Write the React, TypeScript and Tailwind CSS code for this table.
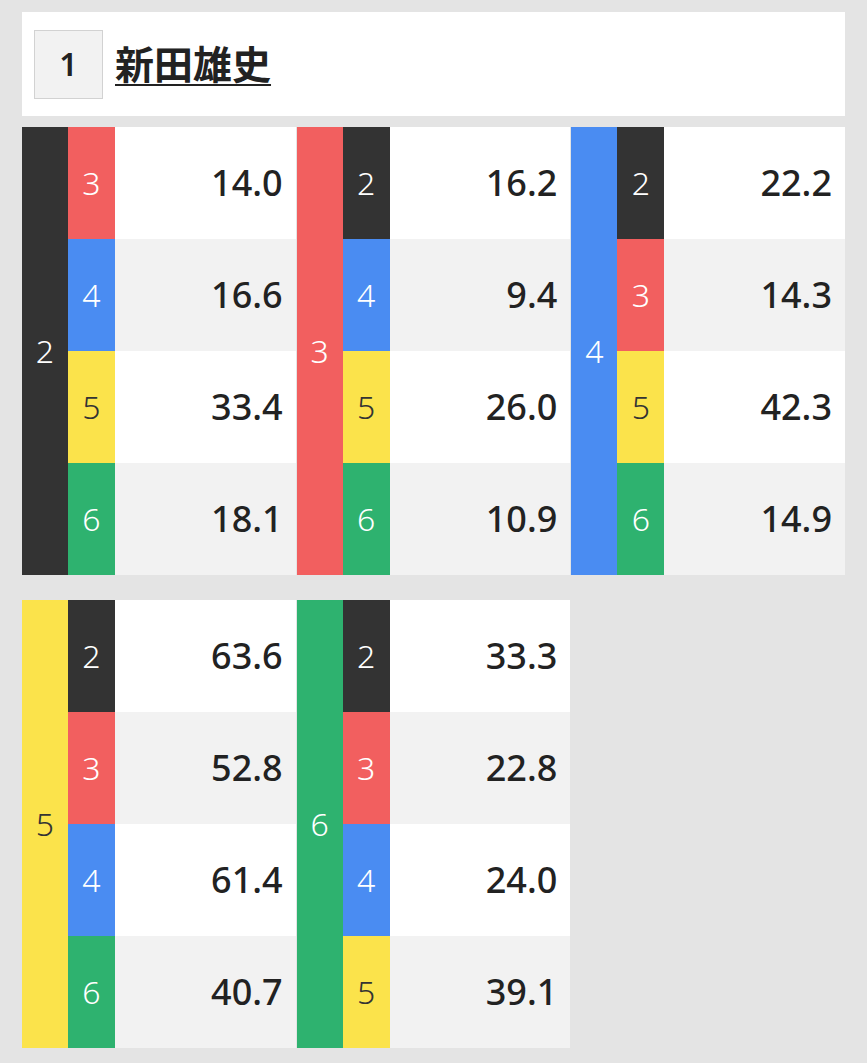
import React from "react";

type Lane = 1 | 2 | 3 | 4 | 5 | 6;

const LANE_STYLE: Record<Lane, string> = {
  1: "bg-white text-[#222]",
  2: "bg-[#333333] text-white",
  3: "bg-[#f25f5f] text-white",
  4: "bg-[#4a8cf2] text-white",
  5: "bg-[#fbe34b] text-[#333]",
  6: "bg-[#2eb26f] text-white",
};

interface BlockData {
  lane: Lane;
  rows: { lane: Lane; value: string }[];
}

const TOP: BlockData[] = [
  {
    lane: 2,
    rows: [
      { lane: 3, value: "14.0" },
      { lane: 4, value: "16.6" },
      { lane: 5, value: "33.4" },
      { lane: 6, value: "18.1" },
    ],
  },
  {
    lane: 3,
    rows: [
      { lane: 2, value: "16.2" },
      { lane: 4, value: "9.4" },
      { lane: 5, value: "26.0" },
      { lane: 6, value: "10.9" },
    ],
  },
  {
    lane: 4,
    rows: [
      { lane: 2, value: "22.2" },
      { lane: 3, value: "14.3" },
      { lane: 5, value: "42.3" },
      { lane: 6, value: "14.9" },
    ],
  },
];

const BOTTOM: BlockData[] = [
  {
    lane: 5,
    rows: [
      { lane: 2, value: "63.6" },
      { lane: 3, value: "52.8" },
      { lane: 4, value: "61.4" },
      { lane: 6, value: "40.7" },
    ],
  },
  {
    lane: 6,
    rows: [
      { lane: 2, value: "33.3" },
      { lane: 3, value: "22.8" },
      { lane: 4, value: "24.0" },
      { lane: 5, value: "39.1" },
    ],
  },
];

function Block({ data }: { data: BlockData }) {
  return (
    <div className="flex">
      <div
        className={`w-[46px] flex items-center justify-center text-[32px] font-light ${LANE_STYLE[data.lane]}`}
      >
        {data.lane}
      </div>
      <div className="flex-1 flex flex-col">
        {data.rows.map((row, i) => (
          <div key={row.lane} className="flex h-[112px]">
            <div
              className={`w-[47px] flex items-center justify-center text-[32px] font-light ${LANE_STYLE[row.lane]}`}
            >
              {row.lane}
            </div>
            <div
              className={`flex-1 flex items-center justify-end pr-[13px] text-[36px] font-medium text-[#222] ${
                i % 2 === 0 ? "bg-white" : "bg-[#f2f2f2]"
              }`}
            >
              {row.value}
            </div>
          </div>
        ))}
      </div>
    </div>
  );
}

export default function App() {
  return (
    <div
      className="min-h-screen bg-[#e4e4e4] px-[22px] pt-[12px] pb-[15px]"
      style={{ fontFamily: '"Noto Sans", "Noto Sans CJK JP", sans-serif' }}
    >
      <div className="bg-white h-[104px] flex items-center pl-[12px]">
        <div className="w-[69px] h-[69px] flex items-center justify-center bg-[#f2f2f2] border border-[#d2d2d2] text-[32px] font-semibold text-[#222]">
          1
        </div>
        <span className="ml-[12px] text-[39px] font-bold text-[#222] underline underline-offset-[5px] decoration-[2px]">
          新田雄史
        </span>
      </div>

      <div className="mt-[11px] grid grid-cols-3 gap-x-px">
        {TOP.map((b) => (
          <Block key={b.lane} data={b} />
        ))}
      </div>

      <div className="mt-[25px] grid grid-cols-3 gap-x-px">
        {BOTTOM.map((b) => (
          <Block key={b.lane} data={b} />
        ))}
      </div>
    </div>
  );
}
